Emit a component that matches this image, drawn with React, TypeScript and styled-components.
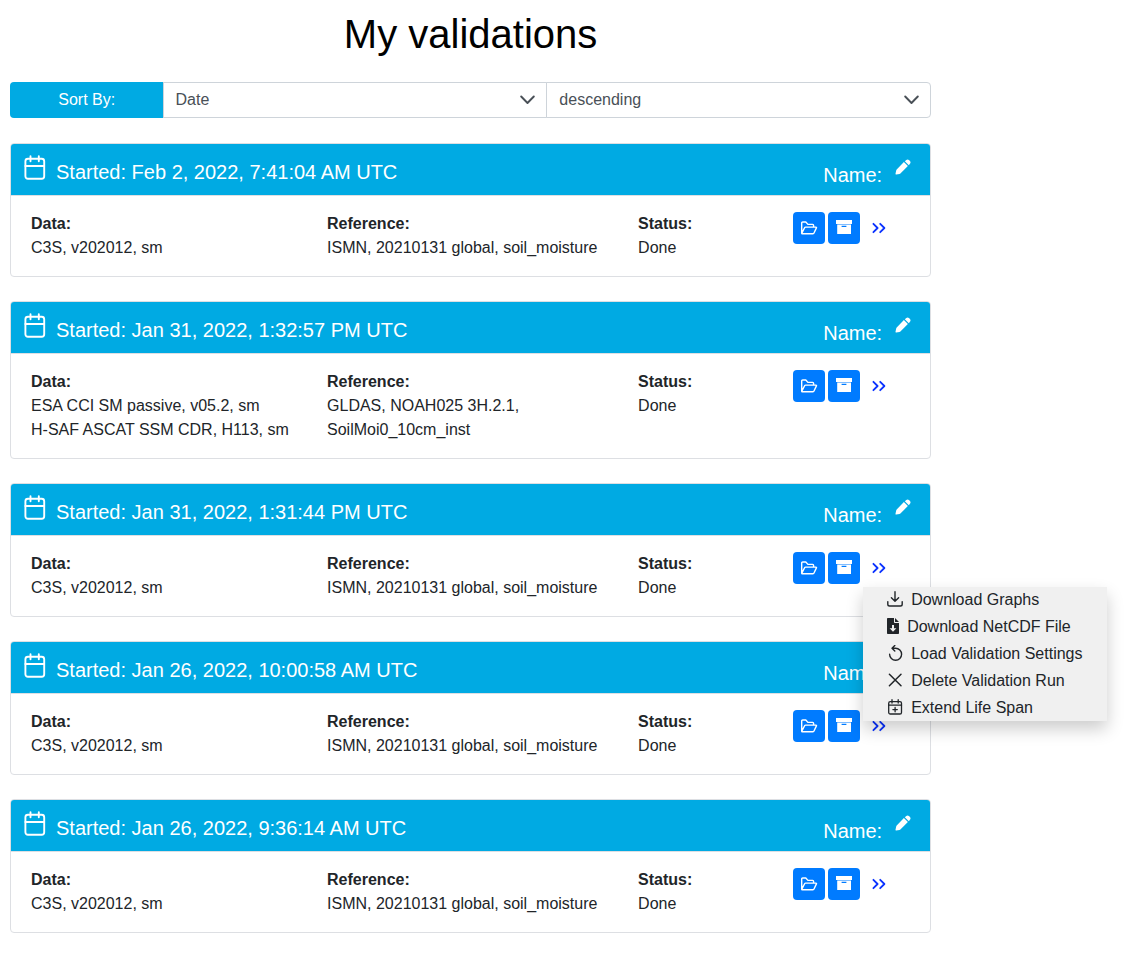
import React from "react";
import styled, { createGlobalStyle } from "styled-components";

const GlobalStyle = createGlobalStyle`
  *, *::before, *::after { box-sizing: border-box; }
  body {
    margin: 0;
    background: #fff;
    color: #212529;
    font-family: "Liberation Sans", Arial, sans-serif;
    font-size: 16px;
    line-height: 24px;
  }
`;

const Page = styled.main`
  width: calc(100% * 10 / 12);
  padding: 10px 8px 20px 10px;
`;

const Title = styled.h1`
  margin: 0 0 24px;
  color: #000;
  font-size: 40px;
  font-weight: 400;
  line-height: 48px;
  text-align: center;
`;

const SortBar = styled.div`
  display: grid;
  grid-template-columns: 2fr 5fr 5fr;
  height: 36px;
  margin-bottom: 25px;
`;

const SortLabel = styled.span`
  display: flex;
  align-items: center;
  justify-content: center;
  border-radius: 4px 0 0 4px;
  background: #00aae3;
  color: #fff;
`;

const SelectBox = styled.div`
  position: relative;
  margin-left: -1px;

  &:last-of-type select { border-radius: 0 4px 4px 0; }

  svg {
    position: absolute;
    top: 0;
    bottom: 0;
    right: 12px;
    margin: auto 0;
    pointer-events: none;
  }
`;

const Select = styled.select`
  display: block;
  width: 100%;
  height: 100%;
  padding: 0 40px 0 12px;
  border: 1px solid #ced4da;
  border-radius: 0;
  background: #fff;
  color: #495057;
  font: inherit;
  appearance: none;
`;

const RunList = styled.div`
  display: grid;
  gap: 24px;
`;

const Card = styled.article`
  border: 1px solid #dddfe3;
  border-radius: 4px;
`;

const CardHeader = styled.header`
  display: flex;
  align-items: flex-start;
  justify-content: space-between;
  height: 52px;
  padding: 11px 14px 0 13px;
  border-bottom: 1px solid #dddfe3;
  border-radius: 3px 3px 0 0;
  background: #00aae3;
  color: #fff;
  font-size: 20px;
`;

const Started = styled.h2`
  display: flex;
  align-items: flex-start;
  gap: 10px;
  margin: 0;
  font-size: 20px;
  font-weight: 400;
  line-height: 34px;
`;

const NameField = styled.div`
  display: flex;
  align-items: flex-start;
  gap: 8px;
  line-height: 40px;
`;

const EditButton = styled.button`
  display: flex;
  padding: 4px 5px;
  border: 0;
  background: none;
  color: inherit;
  cursor: pointer;
`;

const CardBody = styled.div`
  display: grid;
  grid-template-columns: 296fr 311fr 155fr 117fr;
  padding: 16px 20px;
`;

const Field = styled.dl`
  margin: 0;
  min-height: 48px;
`;

const FieldName = styled.dt`
  font-weight: 700;
`;

const FieldValue = styled.dd`
  margin: 0;
`;

const Actions = styled.div`
  display: flex;
  align-items: flex-start;
  gap: 3px;
  position: relative;
`;

const IconButton = styled.button`
  display: flex;
  align-items: center;
  justify-content: center;
  flex: none;
  width: 32px;
  height: 32px;
  padding: 0;
  border: 0;
  border-radius: 4px;
  background: #007bff;
  color: #fff;
  cursor: pointer;
`;

const MoreButton = styled(IconButton)`
  background: none;
  color: #0a32ff;
`;

const Menu = styled.ul`
  position: absolute;
  z-index: 2;
  top: 35px;
  left: 70px;
  display: grid;
  grid-template-rows: repeat(5, 1fr);
  width: 244px;
  height: 134px;
  margin: 0;
  padding: 0;
  background: #f0f0f0;
  box-shadow: 0 8px 16px rgba(0, 0, 0, 0.2);
  list-style: none;
`;

const MenuItem = styled.button`
  display: flex;
  align-items: center;
  gap: 8px;
  width: 100%;
  height: 100%;
  padding: 0 24px;
  border: 0;
  background: none;
  color: inherit;
  font: inherit;
  white-space: nowrap;
  cursor: pointer;

  svg { margin-bottom: 2px; }
`;

const line = {
  fill: "none",
  stroke: "currentColor",
  strokeLinecap: "round" as const,
  strokeLinejoin: "round" as const,
  "aria-hidden": true,
};

const CalendarIcon = () => (
  <svg {...line} width="22" height="26" viewBox="0 0 22 26" strokeWidth="1.9">
    <rect x="1.4" y="3.8" width="18.8" height="20" rx="2.5" />
    <path d="M1.4 11H20.2M6.5 1.2V6.2M14.8 1.2V6.2" />
  </svg>
);

const PencilIcon = () => (
  <svg width="16" height="16" viewBox="0 0 16 16" fill="currentColor" aria-hidden>
    <path d="M8.9 3.1 12.9 7.1 5.4 14.4Q5 14.8 4.5 14.9L1.2 15.5Q.3 15.6.5 14.7L1.2 11.5Q1.3 11 1.7 10.6Z" />
    <path d="M9.8 2.2 11.3.9Q12.7-.1 13.9 1L15 2.1Q16 3.3 15.1 4.6L13.8 6.2Z" />
  </svg>
);

const ChevronDown = () => (
  <svg {...line} width="15" height="10" viewBox="0 0 15 10" strokeWidth="1.9" color="#495057">
    <path d="M1.2 1.5 7.5 8 13.8 1.5" />
  </svg>
);

const FolderOpenIcon = () => (
  <svg {...line} width="18" height="16" viewBox="0 0 18 16" strokeWidth="1.4">
    <path d="M1.7 13.2V3Q1.7 2 2.7 2H5.8L7.9 4.4H12.6Q13.6 4.4 13.6 5.4V7M1.7 13.4 4.6 7.7Q4.9 7.1 5.6 7.1H15.9Q16.8 7.1 16.4 7.9L14 13Q13.7 13.7 13 13.7H2.2Q1.7 13.7 1.7 13.2" />
  </svg>
);

const ArchiveIcon = () => (
  <svg width="18" height="16" viewBox="0 0 18 16" fill="currentColor" aria-hidden>
    <path d="M1 0H17V4H1ZM2.2 4.6H16V14H2.2ZM6.6 5.8V7.1H11.4V5.8Z" fillRule="evenodd" />
  </svg>
);

const DoubleChevronIcon = () => (
  <svg {...line} width="14" height="12" viewBox="0 0 14 12" strokeWidth="1.8">
    <path d="M1.4 1.8 5.6 6 1.4 10.2M8.2 1.8 12.4 6 8.2 10.2" />
  </svg>
);

const DownloadIcon = () => (
  <svg {...line} width="16" height="16" viewBox="0 0 16 16" strokeWidth="1.4">
    <path d="M8 .8V10M4.4 6.7 8 10.2 11.6 6.7M.8 10.6V13.2Q.8 15 2.6 15H13.4Q15.2 15 15.2 13.2V10.6" />
  </svg>
);

const FileDownloadIcon = () => (
  <svg width="12" height="16" viewBox="0 0 12 16" fill="currentColor" aria-hidden>
    <path
      fillRule="evenodd"
      d="M.8 0H7V4.2Q7 5 7.8 5H12V15.2Q12 16 11.2 16H.8Q0 16 0 15.2V.8Q0 0 .8 0ZM5 7V10.2H2.6L6 13.8 9.4 10.2H7V7Z"
    />
    <path d="M8 0 12 4H8Z" />
  </svg>
);

const ReloadIcon = () => (
  <svg {...line} width="16" height="16" viewBox="0 0 16 16" strokeWidth="1.4">
    <path d="M5 3.2H8.6A6 6 0 1 1 2.6 9.2M7.8.5 5 3.2 7.8 5.9" />
  </svg>
);

const CloseIcon = () => (
  <svg {...line} width="16" height="16" viewBox="0 0 16 16" strokeWidth="1.5">
    <path d="M2.4 2.2 14 13.8M14 2.2 2.4 13.8" />
  </svg>
);

const CalendarPlusIcon = () => (
  <svg {...line} width="16" height="16" viewBox="0 0 16 16" strokeWidth="1.3">
    <rect x="1.7" y="2.6" width="12.8" height="12.4" rx="1.6" />
    <path d="M1.7 6.2H14.5M5 .7V4M11.2 .7V4M8.1 8.4V12.8M5.9 10.6H10.3" />
  </svg>
);

const menuEntries = [
  { label: "Download Graphs", Icon: DownloadIcon },
  { label: "Download NetCDF File", Icon: FileDownloadIcon },
  { label: "Load Validation Settings", Icon: ReloadIcon },
  { label: "Delete Validation Run", Icon: CloseIcon },
  { label: "Extend Life Span", Icon: CalendarPlusIcon },
];

interface Run {
  started: string;
  data: string[];
  reference: string;
  status: string;
  menuOpen?: boolean;
}

const ismn = "ISMN, 20210131 global, soil_moisture";

const runs: Run[] = [
  { started: "Feb 2, 2022, 7:41:04 AM UTC", data: ["C3S, v202012, sm"], reference: ismn, status: "Done" },
  {
    started: "Jan 31, 2022, 1:32:57 PM UTC",
    data: ["ESA CCI SM passive, v05.2, sm", "H-SAF ASCAT SSM CDR, H113, sm"],
    reference: "GLDAS, NOAH025 3H.2.1, SoilMoi0_10cm_inst",
    status: "Done",
  },
  { started: "Jan 31, 2022, 1:31:44 PM UTC", data: ["C3S, v202012, sm"], reference: ismn, status: "Done", menuOpen: true },
  { started: "Jan 26, 2022, 10:00:58 AM UTC", data: ["C3S, v202012, sm"], reference: ismn, status: "Done" },
  { started: "Jan 26, 2022, 9:36:14 AM UTC", data: ["C3S, v202012, sm"], reference: ismn, status: "Done" },
];

const RunCard = ({ run }: { run: Run }) => (
  <Card>
    <CardHeader>
      <Started>
        <CalendarIcon />
        Started: {run.started}
      </Started>
      <NameField>
        Name:
        <EditButton type="button" aria-label="Edit name">
          <PencilIcon />
        </EditButton>
      </NameField>
    </CardHeader>
    <CardBody>
      <Field>
        <FieldName>Data:</FieldName>
        {run.data.map((item) => (
          <FieldValue key={item}>{item}</FieldValue>
        ))}
      </Field>
      <Field>
        <FieldName>Reference:</FieldName>
        <FieldValue>{run.reference}</FieldValue>
      </Field>
      <Field>
        <FieldName>Status:</FieldName>
        <FieldValue>{run.status}</FieldValue>
      </Field>
      <Actions>
        <IconButton type="button" aria-label="Open results">
          <FolderOpenIcon />
        </IconButton>
        <IconButton type="button" aria-label="Archive">
          <ArchiveIcon />
        </IconButton>
        <MoreButton type="button" aria-label="More actions" aria-expanded={!!run.menuOpen}>
          <DoubleChevronIcon />
        </MoreButton>
        {run.menuOpen && (
          <Menu>
            {menuEntries.map(({ label, Icon }) => (
              <li key={label}>
                <MenuItem type="button">
                  <Icon />
                  {label}
                </MenuItem>
              </li>
            ))}
          </Menu>
        )}
      </Actions>
    </CardBody>
  </Card>
);

export default function App() {
  return (
    <>
      <GlobalStyle />
      <Page>
        <Title>My validations</Title>
        <SortBar>
          <SortLabel>Sort By:</SortLabel>
          <SelectBox>
            <Select aria-label="Sort by" defaultValue="Date">
              <option>Date</option>
              <option>Name</option>
              <option>Status</option>
            </Select>
            <ChevronDown />
          </SelectBox>
          <SelectBox>
            <Select aria-label="Sort order" defaultValue="descending">
              <option>descending</option>
              <option>ascending</option>
            </Select>
            <ChevronDown />
          </SelectBox>
        </SortBar>
        <RunList>
          {runs.map((run) => (
            <RunCard key={run.started} run={run} />
          ))}
        </RunList>
      </Page>
    </>
  );
}
